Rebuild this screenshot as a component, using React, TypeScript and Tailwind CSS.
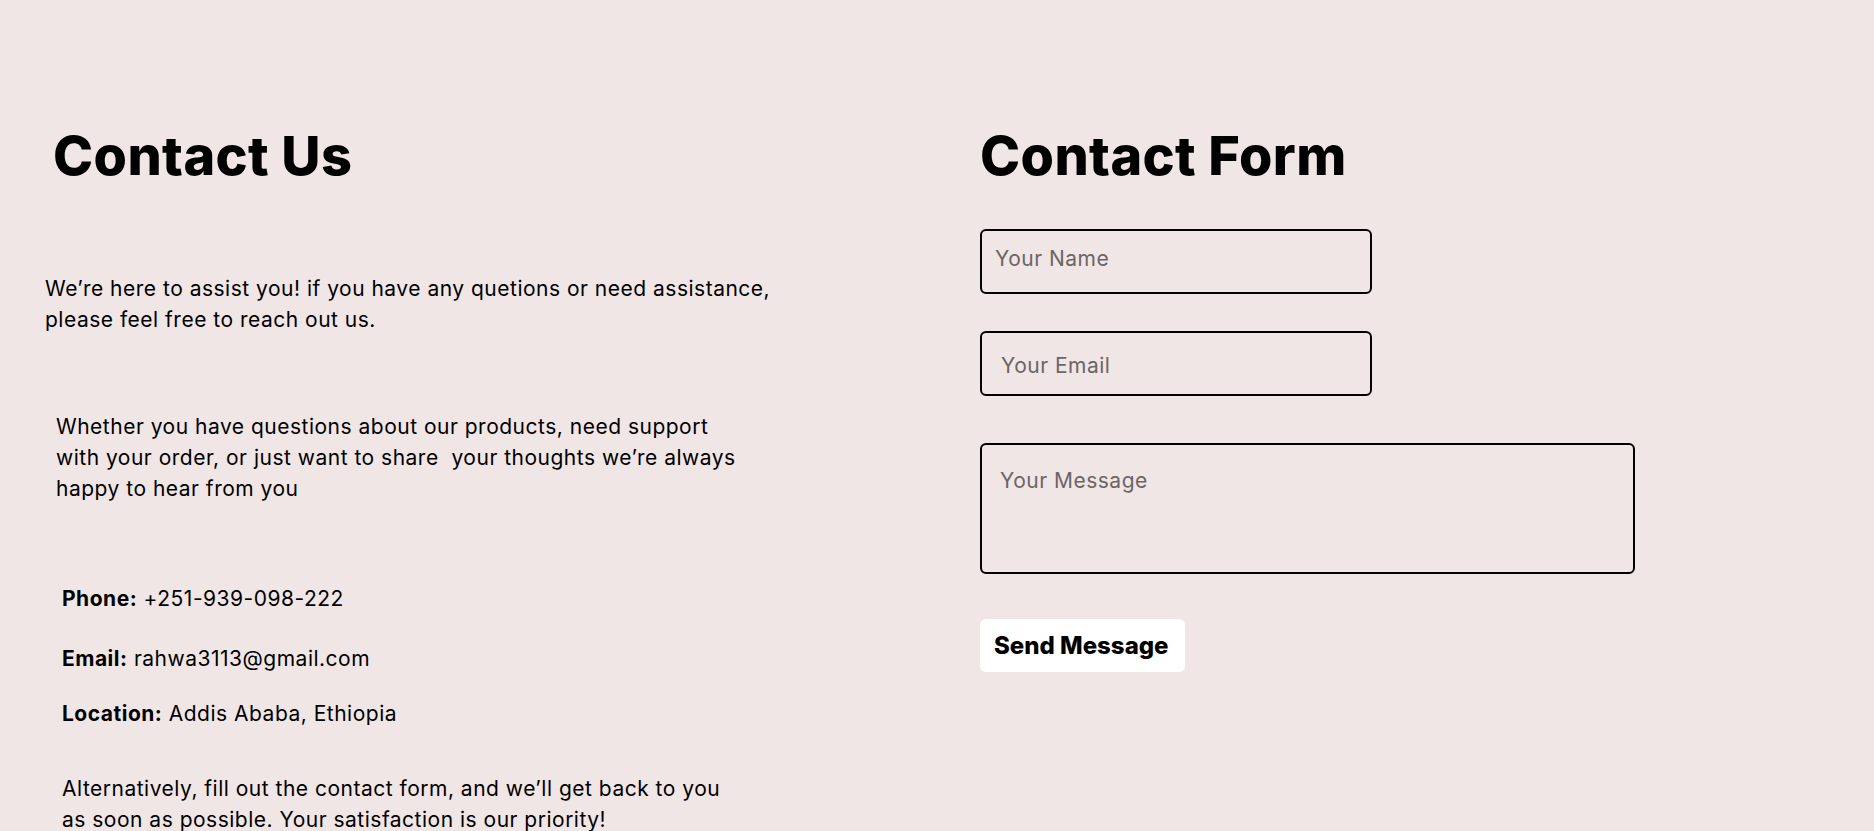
const App = () => {
  const info = [
    { label: "Phone:", value: "+251-939-098-222", mt: "mt-[79px]" },
    { label: "Email:", value: "rahwa3113@gmail.com", mt: "mt-[29px]" },
    { label: "Location:", value: "Addis Ababa, Ethiopia", mt: "mt-[24px]" },
  ];

  return (
    <div className="min-h-[831px] w-full overflow-hidden bg-[#f1e6e6] font-['Inter',sans-serif] text-black">
      <div className="grid grid-cols-2 gap-[86px] px-[45px] pt-[125px]">
        {/* left: contact info */}
        <div>
          <h1 className="ml-[8px] text-[54px] font-extrabold leading-[62px] tracking-[0.4px]">Contact Us</h1>
          <p className="mt-[86px] text-[21px] leading-[31px] tracking-[0.5px]">
            We’re here to assist you! if you have any quetions or need assistance,
            <br />
            please feel free to reach out us.
          </p>
          <p className="ml-[11px] mt-[76px] text-[21px] leading-[31px] tracking-[0.5px]">
            Whether you have questions about our products, need support
            <br />
            with your order, or just want to share&nbsp; your thoughts we’re always
            <br />
            happy to hear from you
          </p>
          <div className="ml-[17px] tracking-[0.5px]">
            {info.map((item) => (
              <p key={item.label} className={`${item.mt} text-[21px] leading-[31px]`}>
                <span className="font-bold">{item.label}</span> {item.value}
              </p>
            ))}
            <p className="mt-[44px] text-[21px] leading-[31px]">
              Alternatively, fill out the contact form, and we’ll get back to you
              <br />
              as soon as possible. Your satisfaction is our priority!
            </p>
          </div>
        </div>

        {/* right: form */}
        <div>
          <h1 className="text-[54px] font-extrabold leading-[62px] tracking-[0.4px]">Contact Form</h1>
          <form className="flex flex-col items-start" onSubmit={(e) => e.preventDefault()}>
            <input
              type="text"
              placeholder="Your Name"
              className="mt-[42px] box-border h-[65px] w-[392px] rounded-[6px] border-2 border-black bg-transparent pb-[20px] pl-[13px] pt-[14px] text-[21px] tracking-[0.5px] outline-none placeholder:text-[#6b6565]"
            />
            <input
              type="email"
              placeholder="Your Email"
              className="mt-[37px] box-border h-[65px] w-[392px] rounded-[6px] border-2 border-black bg-transparent pl-[19px] pt-[3px] text-[21px] tracking-[0.5px] outline-none placeholder:text-[#6b6565]"
            />
            <textarea
              placeholder="Your Message"
              className="mt-[47px] box-border h-[131px] w-[655px] resize-none rounded-[6px] border-2 border-black bg-transparent pl-[18px] pt-[20px] text-[21px] tracking-[0.5px] outline-none placeholder:text-[#6b6565]"
            />
            <button
              type="submit"
              className="mt-[45px] h-[53px] w-[205px] rounded-[6px] bg-white pl-[14px] text-left text-[24px] font-extrabold"
            >
              Send Message
            </button>
          </form>
        </div>
      </div>
    </div>
  );
};

export default App;
